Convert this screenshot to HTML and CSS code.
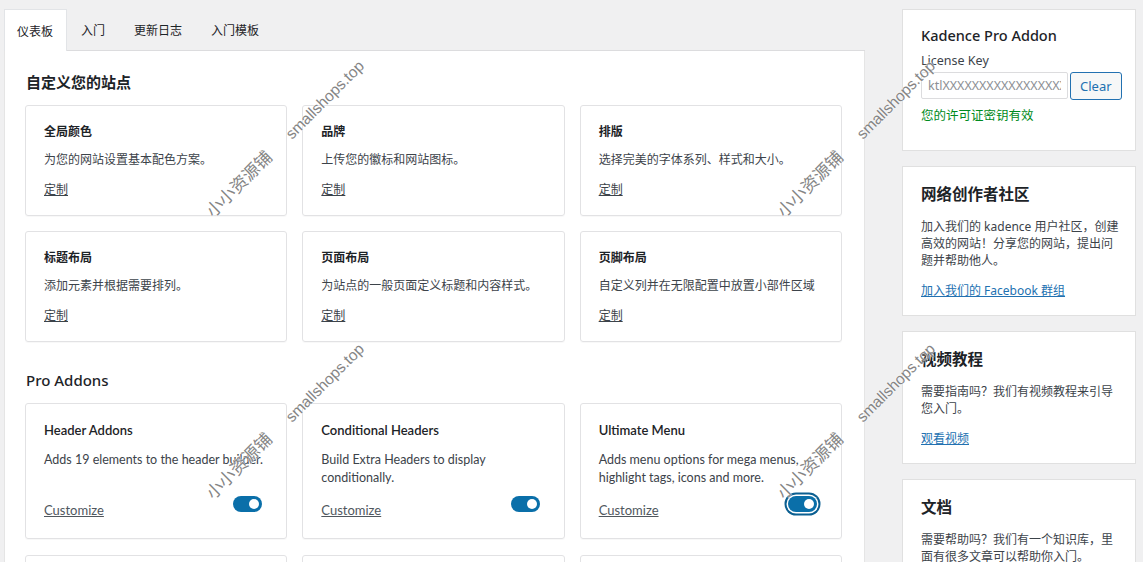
FILE: index.html
```html
<!DOCTYPE html>
<html lang="zh-CN">
<head>
    <meta charset="UTF-8">
    <meta name="viewport" content="width=device-width, initial-scale=1.0">
    <title>Kadence 仪表板</title>
    <link rel="stylesheet" href="styles.css">
</head>
<body>
    <div class="page">
        <main class="main">
            <nav class="tabs">
                <a class="tab active">仪表板</a>
                <a class="tab">入门</a>
                <a class="tab">更新日志</a>
                <a class="tab">入门模板</a>
            </nav>

            <div class="panel">
                <h2 class="section-title">自定义您的站点</h2>
                <div class="card-grid">
                    <div class="card">
                        <h3>全局颜色</h3>
                        <p>为您的网站设置基本配色方案。</p>
                        <a class="card-link">定制</a>
                    </div>
                    <div class="card">
                        <h3>品牌</h3>
                        <p>上传您的徽标和网站图标。</p>
                        <a class="card-link">定制</a>
                    </div>
                    <div class="card">
                        <h3>排版</h3>
                        <p>选择完美的字体系列、样式和大小。</p>
                        <a class="card-link">定制</a>
                    </div>
                    <div class="card">
                        <h3>标题布局</h3>
                        <p>添加元素并根据需要排列。</p>
                        <a class="card-link">定制</a>
                    </div>
                    <div class="card">
                        <h3>页面布局</h3>
                        <p>为站点的一般页面定义标题和内容样式。</p>
                        <a class="card-link">定制</a>
                    </div>
                    <div class="card">
                        <h3>页脚布局</h3>
                        <p>自定义列并在无限配置中放置小部件区域</p>
                        <a class="card-link">定制</a>
                    </div>
                </div>

                <h2 class="section-title pro">Pro Addons</h2>
                <div class="card-grid addons">
                    <div class="card addon">
                        <h3>Header Addons</h3>
                        <p>Adds 19 elements to the header builder.</p>
                        <div class="addon-foot">
                            <a class="card-link">Customize</a>
                            <span class="toggle on"></span>
                        </div>
                    </div>
                    <div class="card addon">
                        <h3>Conditional Headers</h3>
                        <p>Build Extra Headers to display conditionally.</p>
                        <div class="addon-foot">
                            <a class="card-link">Customize</a>
                            <span class="toggle on"></span>
                        </div>
                    </div>
                    <div class="card addon">
                        <h3>Ultimate Menu</h3>
                        <p>Adds menu options for mega menus, highlight tags, icons and more.</p>
                        <div class="addon-foot">
                            <a class="card-link">Customize</a>
                            <span class="toggle on focused"></span>
                        </div>
                    </div>
                    <div class="card addon">
                        <h3>Hooked Elements</h3>
                        <p>Add custom content throughout your site.</p>
                        <div class="addon-foot">
                            <a class="card-link">Customize</a>
                            <span class="toggle on"></span>
                        </div>
                    </div>
                    <div class="card addon">
                        <h3>Archive Meta</h3>
                        <p>Adds meta options to post archives.</p>
                        <div class="addon-foot">
                            <a class="card-link">Customize</a>
                            <span class="toggle on"></span>
                        </div>
                    </div>
                    <div class="card addon">
                        <h3>Dark Mode</h3>
                        <p>Adds a color palette switch for visitors.</p>
                        <div class="addon-foot">
                            <a class="card-link">Customize</a>
                            <span class="toggle on"></span>
                        </div>
                    </div>
                </div>
            </div>
        </main>

        <aside class="sidebar">
            <div class="side-box license">
                <h3 class="license-title">Kadence Pro Addon</h3>
                <label class="license-label">License Key</label>
                <div class="license-row">
                    <input class="license-input" type="text" value="ktlXXXXXXXXXXXXXXXXXXXX" readonly>
                    <button class="btn-clear">Clear</button>
                </div>
                <p class="license-ok">您的许可证密钥有效</p>
            </div>
            <div class="side-box">
                <h3>网络创作者社区</h3>
                <p>加入我们的 kadence 用户社区，创建高效的网站！分享您的网站，提出问题并帮助他人。</p>
                <a class="side-link">加入我们的 Facebook 群组</a>
            </div>
            <div class="side-box">
                <h3>视频教程</h3>
                <p>需要指南吗？我们有视频教程来引导您入门。</p>
                <a class="side-link">观看视频</a>
            </div>
            <div class="side-box">
                <h3>文档</h3>
                <p>需要帮助吗？我们有一个知识库，里面有很多文章可以帮助你入门。</p>
                <a class="side-link">浏览文档</a>
            </div>
        </aside>

        <!-- site stamp layer -->
        <div class="stamps">
            <span class="stamp url s1">smallshops.top</span>
            <span class="stamp url s2">smallshops.top</span>
            <span class="stamp url s3">smallshops.top</span>
            <span class="stamp url s4">smallshops.top</span>
            <span class="stamp cn c1">小小资源铺</span>
            <span class="stamp cn c2">小小资源铺</span>
            <span class="stamp cn c3">小小资源铺</span>
            <span class="stamp cn c4">小小资源铺</span>
        </div>
    </div>
</body>
</html>
```

FILE: styles.css
```css
body {
    margin: 0;
    background: #f0f0f1;
    font-family: "Noto Sans", "Noto Sans CJK SC", sans-serif;
    font-size: 13px;
    color: #3c434a;
    overflow: hidden;
}
.page {
    position: relative;
    display: flex;
    gap: 37px;
    padding: 9px 7px 0 4px;
}
.main {
    flex: 1;
    min-width: 0;
}

/* tabs */
.tabs {
    display: flex;
    height: 41px;
    border-bottom: 1px solid #dcdcde;
}
.tab {
    display: flex;
    align-items: center;
    padding: 0 15px 0 14px;
    font-size: 12px;
    color: #1d2327;
    cursor: pointer;
}
.tab.active {
    background: #fff;
    border: 1px solid #e2e4e7;
    border-bottom: none;
    margin-bottom: -1px;
    padding-left: 12px;
    padding-right: 13px;
}

.panel {
    background: #fff;
    border: 1px solid #e5e5e5;
    border-top: none;
    padding: 21px 22px 40px 20px;
}
.section-title {
    margin: 0 0 13px 1px;
    font-size: 15px;
    line-height: 20px;
    font-weight: 600;
    color: #1d2327;
}
.section-title.pro {
    margin-top: 28px;
    font-weight: 500;
}

.card-grid {
    display: grid;
    grid-template-columns: repeat(3, 1fr);
    gap: 15px;
}
.card-grid.addons {
    row-gap: 16px;
}
.card {
    display: flex;
    flex-direction: column;
    border: 1px solid #e2e2e4;
    border-radius: 3px;
    padding: 17px 18px 16px;
    box-shadow: 0 1px 1px rgba(0,0,0,0.03);
}
.card h3 {
    margin: 0;
    font-size: 12px;
    line-height: 18px;
    font-weight: 600;
    color: #1d2327;
}
.card p {
    margin: 10px 0 0 0;
    font-size: 12px;
    line-height: 18px;
    color: #3c434a;
}
.card-link {
    margin-top: 12px;
    line-height: 18px;
    font-size: 12px;
    color: #3c434a;
    text-decoration: underline;
    align-self: flex-start;
    cursor: pointer;
}

/* addon cards use the latin face */
.addon {
    padding-bottom: 19px;
    font-family: Lato, "Noto Sans", sans-serif;
}
.addon h3 {
    font-size: 13px;
    font-weight: 600;
}
.addon p {
    margin-top: 12px;
    font-size: 12.5px;
}
.addon-foot {
    display: flex;
    justify-content: space-between;
    align-items: flex-start;
    margin-top: auto;
    padding-top: 14px;
    padding-right: 6px;
}
.addon-foot .card-link {
    margin-top: 0;
    font-size: 13px;
    color: #50575e;
}

/* switch */
.toggle {
    position: relative;
    width: 29px;
    height: 16px;
    border-radius: 8px;
    background: #ccc;
    margin-top: -5px;
}
.toggle.on {
    background: #0a6fa9;
}
.toggle::after {
    content: "";
    position: absolute;
    top: 3px;
    left: 3px;
    width: 10px;
    height: 10px;
    border-radius: 50%;
    background: #fff;
}
.toggle.on::after {
    left: 16px;
}
.toggle.focused {
    box-shadow: 0 0 0 1.5px #fff, 0 0 0 3.5px #0b5f91;
}

/* sidebar */
.sidebar {
    width: 234px;
    flex-shrink: 0;
    display: flex;
    flex-direction: column;
    gap: 15px;
}
.side-box {
    background: #fff;
    border: 1px solid #e0e0e0;
    padding: 16px 14px 15px 18px;
}
.side-box h3 {
    margin: 0;
    font-size: 15.5px;
    line-height: 22px;
    font-weight: 600;
    color: #1d2327;
}
.side-box p {
    margin: 13px 0 0 0;
    font-size: 12px;
    line-height: 17px;
}
.side-link {
    display: inline-block;
    margin-top: 13px;
    font-size: 12px;
    line-height: 18px;
    color: #2271b1;
    text-decoration: underline;
    cursor: pointer;
}

.side-box.license {
    padding: 15px 18px 25px;
}
.side-box .license-title {
    font-size: 14.5px;
    line-height: 20px;
    font-weight: 500;
}
.license-label {
    display: block;
    margin-top: 7px;
    font-size: 12.5px;
    line-height: 18px;
    color: #3c434a;
}
.license-row {
    display: flex;
    gap: 2px;
    margin-top: 2px;
}
.license-input {
    width: 147px;
    height: 27px;
    box-sizing: border-box;
    border: 1px solid #dcdcde;
    border-radius: 2px;
    padding: 0 6px;
    font-family: "Noto Sans", sans-serif;
    font-size: 12.5px;
    color: #8c8f94;
    background: #fff;
}
.btn-clear {
    height: 28px;
    padding: 0 9px;
    border: 1px solid #2271b1;
    border-radius: 3px;
    background: #f6f7f7;
    color: #2271b1;
    font-family: "Noto Sans", sans-serif;
    font-size: 13px;
}
.side-box .license-ok {
    margin-top: 7px;
    font-size: 12.5px;
    line-height: 18px;
    color: #008a20;
}

/* rotated site stamps over the page */
.stamps {
    position: absolute;
    inset: 0;
    pointer-events: none;
}
.stamp {
    position: absolute;
    transform: translate(-50%, -50%) rotate(-45deg);
    white-space: nowrap;
    color: #858585;
    text-shadow: 0 0 2px #fff, 0 0 1px #fff;
}
.stamp.url {
    font-family: "Liberation Sans", sans-serif;
    font-size: 15.5px;
}
.stamp.cn {
    font-family: "Noto Sans CJK SC", sans-serif;
    font-size: 17px;
}
.s1 { left: 325px; top: 100px; }
.s2 { left: 896px; top: 100px; }
.s3 { left: 325px; top: 383px; }
.s4 { left: 896px; top: 383px; }
.c1 { left: 238px; top: 183px; }
.c2 { left: 809px; top: 183px; }
.c3 { left: 238px; top: 465px; }
.c4 { left: 809px; top: 465px; }
```
